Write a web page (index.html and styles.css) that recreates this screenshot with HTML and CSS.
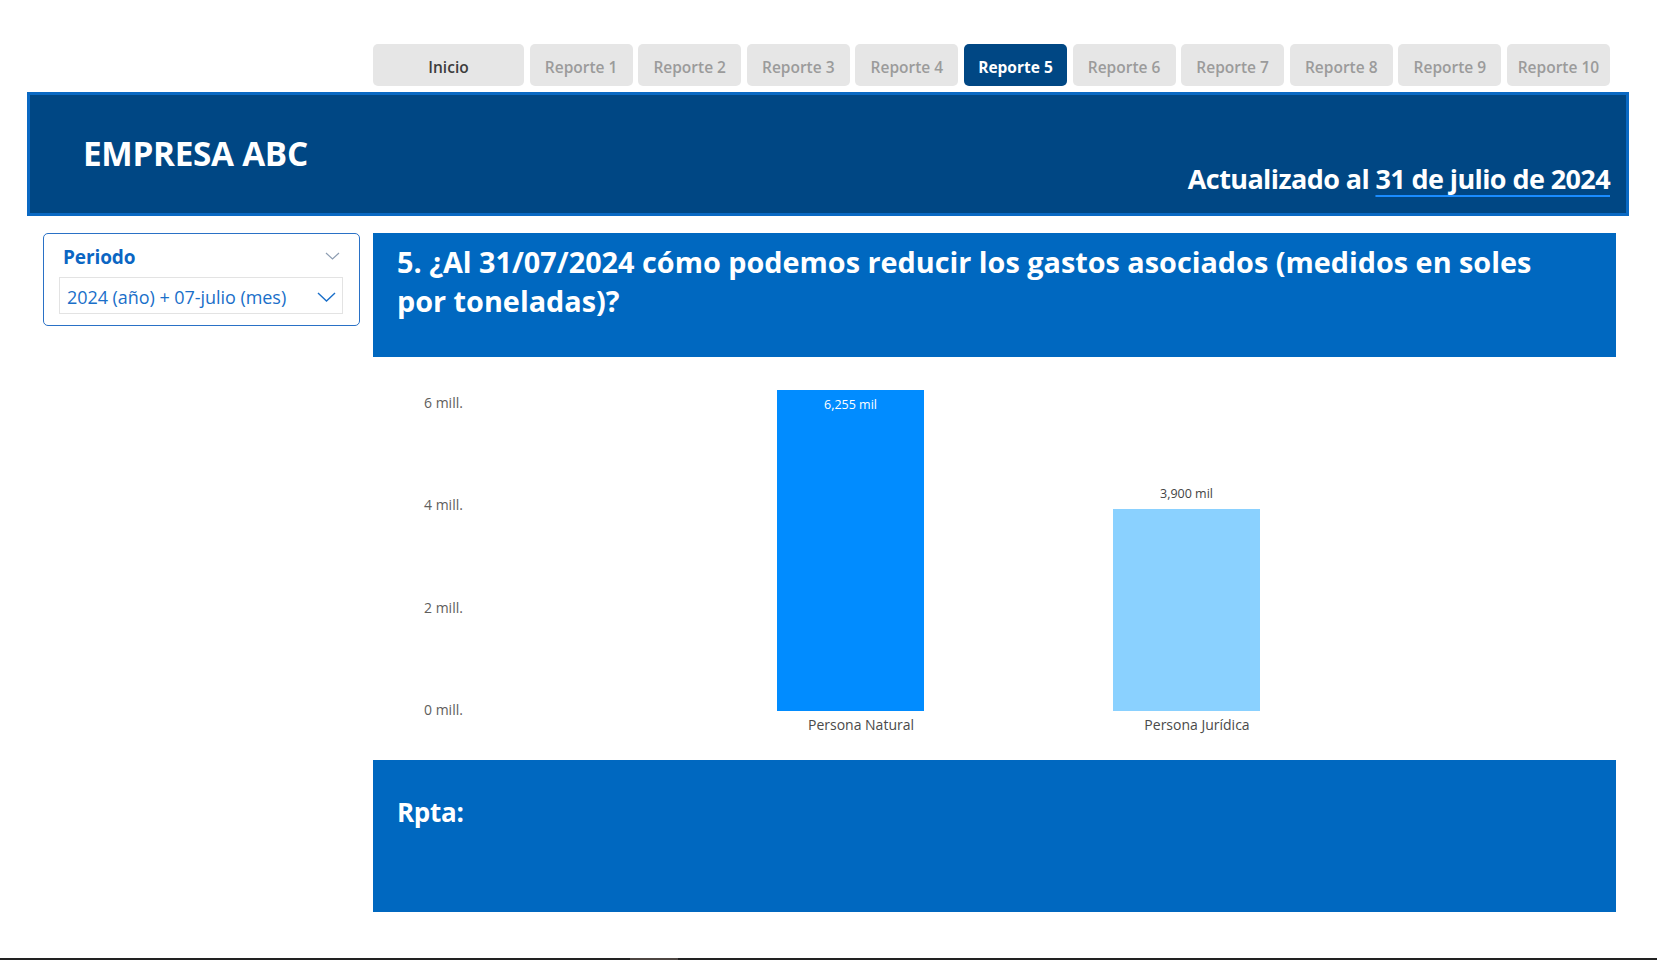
FILE: index.html
```html
<!DOCTYPE html>
<html lang="es">
<head>
<meta charset="utf-8">
<title>Reporte 5 - Empresa ABC</title>
<link rel="stylesheet" href="styles.css">
</head>
<body>
<div class="page">
  <nav class="tabs">
    <a class="tab tab-home">Inicio</a>
    <a class="tab">Reporte 1</a>
    <a class="tab">Reporte 2</a>
    <a class="tab">Reporte 3</a>
    <a class="tab">Reporte 4</a>
    <a class="tab tab-active">Reporte 5</a>
    <a class="tab">Reporte 6</a>
    <a class="tab">Reporte 7</a>
    <a class="tab">Reporte 8</a>
    <a class="tab">Reporte 9</a>
    <a class="tab">Reporte 10</a>
  </nav>

  <header class="banner">
    <h1 class="banner-title">EMPRESA ABC</h1>
    <p class="banner-date">Actualizado al <span class="date-link">31 de julio de 2024</span></p>
  </header>

  <div class="content">
    <aside class="filters">
      <div class="slicer">
        <div class="slicer-head">
          <span class="slicer-title">Periodo</span>
          <svg class="chev-small" width="15" height="8" viewBox="0 0 15 8"><path d="M1 1 L7.5 7 L14 1" fill="none" stroke="#8d9db2" stroke-width="1.2"/></svg>
        </div>
        <div class="dropdown">
          <span class="dropdown-value">2024 (año) + 07-julio (mes)</span>
          <svg class="chev" width="19" height="10" viewBox="0 0 19 10"><path d="M1 1 L9.5 9 L18 1" fill="none" stroke="#1a6fc9" stroke-width="1.4"/></svg>
        </div>
      </div>
    </aside>

    <main class="main">
      <section class="question">
        <h2 class="question-text">5. ¿Al 31/07/2024 cómo podemos reducir los gastos asociados (medidos en soles por toneladas)?</h2>
      </section>

      <section class="chart">
        <div class="y-axis">
          <span class="y-label">6 mill.</span>
          <span class="y-label">4 mill.</span>
          <span class="y-label">2 mill.</span>
          <span class="y-label">0 mill.</span>
        </div>
        <div class="plot">
          <div class="category">
            <div class="bar bar-natural" style="height:321px"><span class="value-inside">6,255 mil</span></div>
            <span class="cat-label">Persona Natural</span>
          </div>
          <div class="category">
            <span class="value-outside">3,900 mil</span>
            <div class="bar bar-juridica" style="height:202px"></div>
            <span class="cat-label">Persona Jurídica</span>
          </div>
        </div>
      </section>

      <section class="answer">
        <h3 class="answer-text">Rpta:</h3>
      </section>
    </main>
  </div>

  <div class="bottom-edge"><span class="edge-thumb"></span></div>
</div>
</body>
</html>
```

FILE: styles.css
```css
* { box-sizing: border-box; }

html, body {
  margin: 0;
  padding: 0;
  background: #ffffff;
}

body {
  font-family: "Open Sans", "Noto Sans", sans-serif;
  color: #333333;
}

.page {
  width: 1657px;
  height: 960px;
  display: flex;
  flex-direction: column;
  overflow: hidden;
}

/* ---------- Tabs ---------- */
.tabs {
  display: flex;
  gap: 5.6px;
  padding-left: 373px;
  margin-top: 44px;
}

.tab {
  width: 103px;
  height: 42px;
  border-radius: 5px;
  background: #e6e6e6;
  color: #9b9b9b;
  font-size: 15.5px;
  font-weight: 600;
  letter-spacing: 0;
  display: flex;
  align-items: center;
  justify-content: center;
  padding-top: 3px;
}

.tab-home {
  width: 151px;
  color: #3c3c3c;
}

.tab-active {
  background: #004784;
  color: #ffffff;
  font-weight: 700;
}

/* ---------- Banner ---------- */
.banner {
  margin: 6px 0 0 27px;
  width: 1602px;
  height: 124px;
  border: 3px solid #0a69c3;
  background: #004784;
  display: flex;
  justify-content: space-between;
  align-items: center;
  padding: 0 16px 0 53px;
}

.banner-title {
  margin: 0 0 2px 0;
  font-size: 33.3px;
  font-weight: 700;
  color: #ffffff;
  letter-spacing: -0.3px;
}

.banner-date {
  margin: 0;
  align-self: flex-end;
  margin-bottom: 16px;
  font-size: 27px;
  font-weight: 700;
  color: #ffffff;
  line-height: 36px;
  letter-spacing: -0.6px;
}

.date-link {
  text-decoration: underline;
  text-decoration-color: #1a8cff;
  text-decoration-thickness: 2px;
  text-underline-offset: 6px;
}

/* ---------- Content ---------- */
.content {
  display: flex;
  gap: 13px;
  padding-top: 16.5px;
  padding-left: 43px;
}

.filters {
  width: 317px;
  padding-top: 0.5px;
}

.slicer {
  height: 93px;
  border: 1px solid #2a71c6;
  border-radius: 5px;
  padding: 11px 16px 0 15px;
}

.slicer-head {
  display: flex;
  justify-content: space-between;
  align-items: center;
  padding-left: 4px;
  padding-right: 3px;
  height: 24px;
}

.slicer-title {
  font-size: 19px;
  font-weight: 700;
  color: #0b66c3;
  line-height: 24px;
  letter-spacing: -0.1px;
}

.chev-small {
  display: block;
  margin-top: -2px;
}

.dropdown {
  margin-top: 8px;
  height: 37px;
  border: 1px solid #e3e3e3;
  display: flex;
  justify-content: space-between;
  align-items: center;
  padding: 2px 6px 0 7px;
}

.dropdown-value {
  font-size: 18px;
  color: #1a6fc9;
  letter-spacing: -0.05px;
}

.chev {
  display: block;
}

/* ---------- Main ---------- */
.main {
  width: 1243px;
  display: flex;
  flex-direction: column;
}

.question {
  height: 124px;
  background: #0068c0;
  padding: 9px 50px 0 24px;
}

.question-text {
  margin: 0;
  font-size: 28.8px;
  font-weight: 700;
  line-height: 39px;
  color: #ffffff;
  letter-spacing: 0;
}

.chart {
  height: 403px;
  display: flex;
  padding-left: 50px;
}

.y-axis {
  width: 60px;
  margin-top: 46px;
  height: 308px;
  display: flex;
  flex-direction: column;
  justify-content: space-between;
}

.y-label {
  display: block;
  height: 0;
  line-height: 0;
  font-size: 14px;
  color: #605e5c;
  white-space: nowrap;
  padding-left: 1px;
}

.plot {
  height: 378px;
  display: flex;
  align-items: flex-end;
  gap: 189px;
  margin-left: 294px;
}

.category {
  width: 147px;
  display: flex;
  flex-direction: column;
  align-items: stretch;
}

.bar {
  width: 147px;
  display: flex;
  justify-content: center;
}

.bar-natural { background: #018cff; }
.bar-juridica { background: #8ad1ff; }

.value-inside {
  font-size: 12.5px;
  line-height: 16px;
  color: #ffffff;
  padding-top: 7px;
}

.value-outside {
  font-size: 12.5px;
  line-height: 16px;
  color: #444444;
  text-align: center;
  margin-bottom: 7px;
}

.cat-label {
  margin-top: 3.3px;
  font-size: 14px;
  line-height: 20px;
  color: #4a4a4a;
  text-align: center;
  white-space: nowrap;
  padding-left: 21px;
}

.answer {
  height: 152px;
  background: #0068c0;
  padding: 34.5px 24px 0 24px;
}

.answer-text {
  margin: 0;
  font-size: 26px;
  font-weight: 700;
  line-height: 36px;
  color: #ffffff;
  letter-spacing: -0.3px;
}

/* ---------- Bottom edge ---------- */
.bottom-edge {
  margin-top: auto;
  height: 2px;
  background: #222222;
  padding-left: 630px;
}

.edge-thumb {
  display: block;
  width: 48px;
  height: 2px;
  background: #4d4642;
}
```
